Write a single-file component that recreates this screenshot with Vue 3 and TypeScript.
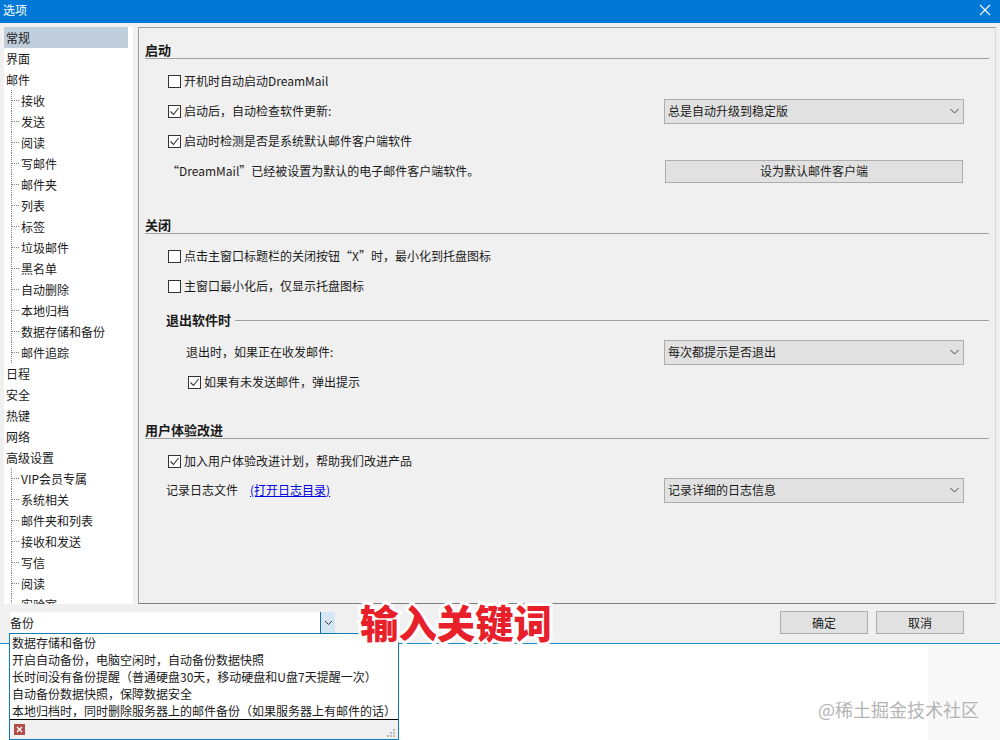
<script setup lang="ts">
interface NavItem {
  label: string;
  child?: boolean;
  selected?: boolean;
}

const nav: NavItem[] = [
  { label: '常规', selected: true },
  { label: '界面' },
  { label: '邮件' },
  ...['接收', '发送', '阅读', '写邮件', '邮件夹', '列表', '标签', '垃圾邮件', '黑名单', '自动删除', '本地归档', '数据存储和备份', '邮件追踪'].map((label) => ({ label, child: true })),
  { label: '日程' },
  { label: '安全' },
  { label: '热键' },
  { label: '网络' },
  { label: '高级设置' },
  ...['VIP会员专属', '系统相关', '邮件夹和列表', '接收和发送', '写信', '阅读', '实验室'].map((label) => ({ label, child: true })),
];

const results = [
  '数据存储和备份',
  '开启自动备份，电脑空闲时，自动备份数据快照',
  '长时间没有备份提醒（普通硬盘30天，移动硬盘和U盘7天提醒一次）',
  '自动备份数据快照，保障数据安全',
  '本地归档时，同时删除服务器上的邮件备份（如果服务器上有邮件的话）',
];
</script>

<template>
  <div class="window">
    <header class="titlebar">
      <span>选项</span>
      <svg width="14" height="14" viewBox="0 0 14 14" class="close">
        <path d="M2 2l10 10M12 2L2 12" stroke="#fff" stroke-width="1.1" fill="none" />
      </svg>
    </header>

    <div class="body">
      <aside class="nav">
        <div
          v-for="(item, i) in nav"
          :key="i"
          class="nav-item"
          :class="{ child: item.child, selected: item.selected }"
        >
          {{ item.label }}
        </div>
      </aside>

      <main class="panel">
        <h2 class="section-title first">启动</h2>
        <label class="row"><span class="check"></span>开机时自动启动DreamMail</label>
        <div class="row split">
          <label class="row-label"><span class="check on"><svg width="11" height="11" viewBox="0 0 11 11"><path d="M1.5 5.5l3 3 5-6.5" /></svg></span>启动后，自动检查软件更新:</label>
          <div class="select">总是自动升级到稳定版<svg width="9" height="6" viewBox="0 0 9 6"><path d="M.5 1l4 4 4-4" /></svg></div>
        </div>
        <label class="row"><span class="check on"><svg width="11" height="11" viewBox="0 0 11 11"><path d="M1.5 5.5l3 3 5-6.5" /></svg></span>启动时检测是否是系统默认邮件客户端软件</label>
        <div class="row split note">
          <span>“DreamMail”已经被设置为默认的电子邮件客户端软件。</span>
          <button class="btn wide">设为默认邮件客户端</button>
        </div>

        <h2 class="section-title close-title">关闭</h2>
        <label class="row"><span class="check"></span>点击主窗口标题栏的关闭按钮“X”时，最小化到托盘图标</label>
        <label class="row"><span class="check"></span>主窗口最小化后，仅显示托盘图标</label>
        <div class="sub-title"><b>退出软件时</b><i></i></div>
        <div class="row split exit-row">
          <span>退出时，如果正在收发邮件:</span>
          <div class="select">每次都提示是否退出<svg width="9" height="6" viewBox="0 0 9 6"><path d="M.5 1l4 4 4-4" /></svg></div>
        </div>
        <label class="row nested"><span class="check on"><svg width="11" height="11" viewBox="0 0 11 11"><path d="M1.5 5.5l3 3 5-6.5" /></svg></span>如果有未发送邮件，弹出提示</label>

        <h2 class="section-title ux-title">用户体验改进</h2>
        <label class="row"><span class="check on"><svg width="11" height="11" viewBox="0 0 11 11"><path d="M1.5 5.5l3 3 5-6.5" /></svg></span>加入用户体验改进计划，帮助我们改进产品</label>
        <div class="row split log-row">
          <span>记录日志文件<a class="link">(打开日志目录)</a></span>
          <div class="select">记录详细的日志信息<svg width="9" height="6" viewBox="0 0 9 6"><path d="M.5 1l4 4 4-4" /></svg></div>
        </div>
      </main>
    </div>

    <div class="actions">
      <div class="search">
        <span class="search-input">备份</span>
        <span class="search-arrow"><svg width="9" height="6" viewBox="0 0 9 6"><path d="M1 1l3.5 3.5L8 1" /></svg></span>
      </div>
      <button class="btn action">确定</button>
      <button class="btn action">取消</button>
    </div>

    <div class="below">
      <div class="stripe"></div>
    </div>

    <div class="popup">
      <div class="popup-list">
        <div v-for="line in results" :key="line">{{ line }}</div>
      </div>
      <div class="popup-foot">
        <span class="popup-close"><svg width="7" height="7" viewBox="0 0 7 7"><path d="M1 1l5 5M6 1L1 6" /></svg></span>
        <svg class="grip" width="8" height="8" viewBox="0 0 8 8"><path d="M6 0h2v2H6zM3 3h2v2H3zM6 3h2v2H6zM0 6h2v2H0zM3 6h2v2H3zM6 6h2v2H6z" /></svg>
      </div>
    </div>

    <div class="annotation">输入关键词</div>
    <div class="watermark">@稀土掘金技术社区</div>
  </div>
</template>

<style>
html,
body {
  margin: 0;
  background: #fff;
}
</style>

<style scoped>
.window {
  position: relative;
  width: 1000px;
  height: 740px;
  overflow: hidden;
  background: #f0f0f0;
  color: #1a1a1a;
  font: 12px/16px "Noto Sans CJK SC", "Noto Sans", sans-serif;
}

.titlebar {
  height: 23px;
  padding: 0 8px 3px 3px;
  display: flex;
  align-items: center;
  justify-content: space-between;
  box-sizing: border-box;
  background: #0078d7;
  color: #fff;
}

.body {
  display: flex;
  gap: 5px;
  height: 581px;
  padding: 4px 4px 0 4px;
  box-sizing: border-box;
}

.nav {
  width: 129px;
  flex: none;
  overflow: hidden;
  background: #fff;
}

.nav-item {
  position: relative;
  height: 21px;
  line-height: 21px;
  padding-left: 2px;
}

.nav-item.selected {
  width: 124px;
  box-sizing: border-box;
  background: #c0cddb;
}

.nav-item.child {
  padding-left: 17px;
}

.nav-item.child::before {
  content: "";
  position: absolute;
  left: 7px;
  top: 0;
  height: 21px;
  border-left: 1px dotted #808080;
}

.nav-item.child::after {
  content: "";
  position: absolute;
  left: 8px;
  top: 10px;
  width: 7px;
  border-top: 1px dotted #808080;
}

.panel {
  flex: 1;
  min-width: 0;
  padding: 0 6px;
  border: 1px solid #a0a0a0;
  border-right-color: #d8d8d8;
  border-bottom-color: #808080;
  box-sizing: border-box;
}

.section-title {
  height: 16px;
  margin: 0 0 7px;
  font-size: 13px;
  line-height: 16px;
  font-weight: 700;
  border-bottom: 1px solid #a0a0a0;
}

.section-title.first {
  margin-top: 14px;
}

.section-title.close-title {
  margin-top: 31px;
}

.section-title.ux-title {
  margin-top: 25px;
}

.row {
  display: flex;
  align-items: center;
  height: 30px;
  padding-left: 23px;
}

.row-label {
  display: flex;
  align-items: center;
}

.row.split {
  justify-content: space-between;
  padding-right: 25px;
}

.note {
  padding-left: 22px;
}

.exit-row {
  padding-left: 41px;
}

.row.nested {
  padding-left: 43px;
}

.row.log-row {
  height: 28px;
  padding-left: 21px;
}

.check {
  width: 11px;
  height: 11px;
  margin-right: 3px;
  flex: none;
  display: flex;
  align-items: center;
  justify-content: center;
  border: 1px solid #333;
  background: #fff;
}

.check svg path {
  fill: none;
  stroke: #333;
  stroke-width: 1.1;
}

.select {
  width: 300px;
  height: 25px;
  padding: 0 4px 0 3px;
  flex: none;
  display: flex;
  align-items: center;
  justify-content: space-between;
  box-sizing: border-box;
  background: #e1e1e1;
  border: 1px solid #adadad;
}

.select svg path {
  fill: none;
  stroke: #444;
}

.btn {
  padding: 0;
  border: 1px solid #adadad;
  background: #e1e1e1;
  color: inherit;
  font: inherit;
}

.btn.wide {
  width: 298px;
  height: 23px;
  margin-right: 1px;
}

.sub-title {
  height: 16px;
  margin: 11px 0 9px 21px;
  display: flex;
  align-items: center;
  gap: 4px;
}

.sub-title b {
  font-size: 13px;
  font-weight: 700;
}

.sub-title i {
  flex: 1;
  border-top: 1px solid #a0a0a0;
}

.link {
  margin-left: 12px;
  color: #0000e0;
  text-decoration: underline;
}

.actions {
  height: 40px;
  padding: 7px 36px 0 10px;
  display: flex;
  gap: 8px;
  box-sizing: border-box;
  border-bottom: 1px solid #1c8ccc;
}

.search {
  display: flex;
  height: 21px;
  margin: 1px auto 0 0;
}

.search-input {
  width: 310px;
  line-height: 21px;
  background: #fff;
}

.search-arrow {
  width: 14px;
  display: flex;
  align-items: center;
  justify-content: center;
  background: #d6e6f5;
  border-left: 1px solid #0f6cae;
}

.search-arrow path {
  fill: none;
  stroke: #333;
}

.btn.action {
  width: 88px;
  height: 23px;
}

.below {
  height: 96px;
  display: flex;
  justify-content: flex-end;
  background: #fff;
}

.stripe {
  width: 72px;
  background: #f8f8f8;
}

.popup {
  position: absolute;
  left: 9px;
  top: 633px;
  width: 390px;
  height: 107px;
  display: flex;
  flex-direction: column;
  box-sizing: border-box;
  background: #f0f0f0;
  border: 1px solid #0f7bb8;
}

.popup-list {
  height: 86px;
  padding-left: 2px;
  box-sizing: border-box;
  background: #fff;
  border-bottom: 1px solid #000;
  line-height: 17px;
  white-space: nowrap;
}

.popup-foot {
  flex: 1;
  display: flex;
  align-items: center;
  justify-content: space-between;
  padding: 0 3px 0 4px;
}

.popup-close {
  width: 11px;
  height: 11px;
  display: flex;
  align-items: center;
  justify-content: center;
  background: #b44a4a;
}

.popup-close path {
  fill: none;
  stroke: #fff;
  stroke-width: 1.4;
}

.grip {
  align-self: flex-end;
  margin-bottom: 2px;
  fill: #bbb;
}

.annotation {
  position: absolute;
  left: 360px;
  top: 596px;
  font-size: 38.4px;
  line-height: 50px;
  font-weight: 900;
  color: #e8202a;
  -webkit-text-stroke: 6px #fff;
  paint-order: stroke fill;
  white-space: nowrap;
}

.watermark {
  position: absolute;
  left: 818px;
  top: 698px;
  font-size: 18px;
  line-height: 22px;
  color: #b4b4b4;
  white-space: nowrap;
}
</style>
